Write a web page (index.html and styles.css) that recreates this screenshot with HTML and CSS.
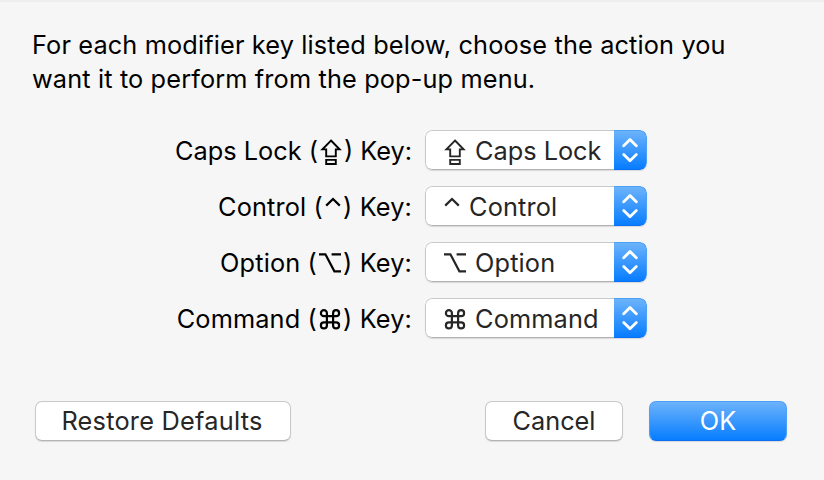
FILE: index.html
```html
<!DOCTYPE html>
<html lang="en">
<head>
    <meta charset="UTF-8">
    <meta name="viewport" content="width=device-width, initial-scale=1.0">
    <title>Modifier Keys</title>
    <link rel="stylesheet" href="styles.css">
</head>
<body>
<!-- Shared icons -->
<svg class="icon-defs" aria-hidden="true">
    <symbol id="caps" viewBox="0 0 22 28">
        <path d="M11 3.5L19.6 12.4H15.8V19.4H6.2V12.4H2.4Z"/>
        <path d="M6.2 22.9H15.8V27H6.2Z"/>
    </symbol>
    <symbol id="control" viewBox="0 0 16 28">
        <path class="thick" d="M1.2 12.6L8 6L14.8 12.6"/>
    </symbol>
    <symbol id="option" viewBox="0 0 22 28">
        <path class="thick" d="M0 5.3H6.4L15.4 22.3H22M12.6 5.3H22"/>
    </symbol>
    <symbol id="command" viewBox="0 0 22 28">
        <path class="thick" d="M7.9 11.2V8.2A3 3 0 1 0 4.9 11.2H17.1A3 3 0 1 0 14.1 8.2V20.4A3 3 0 1 0 17.1 17.4H4.9A3 3 0 1 0 7.9 20.4V11.2"/>
    </symbol>
    <symbol id="arrows" viewBox="0 0 16 26">
        <path d="M1.7 8.7L8 2.6L14.3 8.7M1.7 17.6L8 23.7L14.3 17.6"/>
    </symbol>
</svg>
<div class="dialog">
    <p class="message">For each modifier key listed below, choose the action you<br>want it to perform from the pop-up menu.</p>
    <div class="keys">
        <div class="row">
            <div class="label">Caps Lock (<svg class="icon"><use href="#caps"/></svg>) Key:</div>
            <div class="popup">
                <div class="value"><svg class="icon"><use href="#caps"/></svg><span>Caps Lock</span></div>
                <div class="stepper"><svg class="arrows"><use href="#arrows"/></svg></div>
            </div>
        </div>
        <div class="row">
            <div class="label spaced">Control (<svg class="icon narrow"><use href="#control"/></svg>) Key:</div>
            <div class="popup">
                <div class="value spaced"><svg class="icon narrow"><use href="#control"/></svg><span>Control</span></div>
                <div class="stepper"><svg class="arrows"><use href="#arrows"/></svg></div>
            </div>
        </div>
        <div class="row">
            <div class="label spaced">Option (<svg class="icon"><use href="#option"/></svg>) Key:</div>
            <div class="popup">
                <div class="value spaced"><svg class="icon"><use href="#option"/></svg><span>Option</span></div>
                <div class="stepper"><svg class="arrows"><use href="#arrows"/></svg></div>
            </div>
        </div>
        <div class="row">
            <div class="label spaced">Command (<svg class="icon"><use href="#command"/></svg>) Key:</div>
            <div class="popup">
                <div class="value spaced"><svg class="icon"><use href="#command"/></svg><span>Command</span></div>
                <div class="stepper"><svg class="arrows"><use href="#arrows"/></svg></div>
            </div>
        </div>
    </div>
    <div class="buttons">
        <button class="restore">Restore Defaults</button>
        <button class="cancel">Cancel</button>
        <button class="ok">OK</button>
    </div>
</div>
</body>
</html>
```
FILE: styles.css
```css
* {
    box-sizing: border-box;
    margin: 0;
    padding: 0;
}

body {
    font-family: Inter, sans-serif;
    font-size: 25.3px;
    background-color: #f6f6f6;
    color: #000;
}

.icon-defs {
    display: none;
}

/* Dialog */
.dialog {
    width: 824px;
    height: 480px;
    border-top: 2px solid #efefef;
    padding: 26px 37px 0 32px;
    overflow: hidden;
}

.message {
    line-height: 34px;
    letter-spacing: 0.14px;
    white-space: nowrap;
}

/* Modifier key rows */
.keys {
    display: flex;
    flex-direction: column;
    gap: 16px;
    margin-top: 34px;
}

.row {
    display: flex;
    height: 40px;
}

.label {
    width: 380px;
    margin-right: 13px;
    line-height: 42px;
    text-align: right;
    white-space: nowrap;
}

.spaced {
    letter-spacing: 0.15px;
}

.icon {
    width: 22px;
    height: 28px;
    fill: none;
    stroke: currentColor;
    stroke-width: 1.9;
    flex-shrink: 0;
    overflow: visible;
}

.thick {
    stroke-width: 2.2;
}

.narrow {
    width: 16px;
}

.label .icon {
    margin: 0 2px;
    vertical-align: -5px;
}

/* Popup menus */
.popup {
    display: flex;
    width: 222px;
    height: 40px;
    border-radius: 7px;
    background-color: #fff;
    box-shadow: 0 1px 1px rgba(0, 0, 0, 0.12);
    overflow: hidden;
}

.value {
    display: flex;
    align-items: center;
    flex: 1;
    gap: 9px;
    padding-left: 18px;
    border: 1px solid #c9c9c9;
    border-right: none;
    border-bottom-color: #b3b3b3;
    border-radius: 7px 0 0 7px;
    color: #262626;
    white-space: nowrap;
}

.value .icon {
    margin-top: 2px;
}

.stepper {
    display: flex;
    align-items: center;
    justify-content: center;
    width: 33px;
    background: linear-gradient(#6cb3fa, #077dff);
    border: 1px solid #4a9ff6;
    border-left: none;
    border-bottom-color: #0a6ff5;
    border-radius: 0 7px 7px 0;
}

.arrows {
    width: 16px;
    height: 26px;
    fill: none;
    stroke: #fff;
    stroke-width: 2.8;
    stroke-linecap: round;
    stroke-linejoin: round;
}

/* Bottom buttons */
.buttons {
    display: flex;
    margin: 63px 0 0 3px;
}

button {
    width: 138px;
    height: 40px;
    padding-bottom: 2px;
    font: inherit;
    color: #262626;
    background-color: #fff;
    border: 1px solid #c9c9c9;
    border-bottom-color: #b3b3b3;
    border-radius: 7px;
    box-shadow: 0 1px 1px rgba(0, 0, 0, 0.12);
    white-space: nowrap;
}

.restore {
    width: 256px;
    margin-right: auto;
    padding-right: 2px;
    letter-spacing: 0.25px;
}

.ok {
    margin-left: 26px;
    color: #fff;
    background: linear-gradient(#6cb3fa, #077dff);
    border-color: #4a9ff6;
    border-bottom-color: #0a6ff5;
}
```
